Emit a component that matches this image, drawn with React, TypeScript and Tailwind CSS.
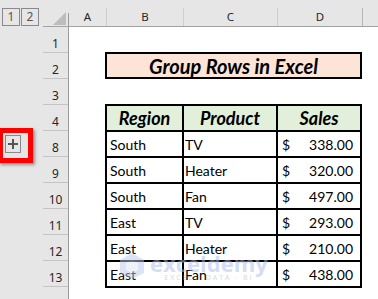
import React from "react";

const hdrFont = { fontFamily: '"Noto Sans", "DejaVu Sans", sans-serif' };
const cellFont = { fontFamily: 'Lato, "Noto Sans", sans-serif' };

const rows = ["1", "2", "3", "4", "8", "9", "10", "11", "12", "13"];

const data = [
  ["South", "TV", "338.00"],
  ["South", "Heater", "320.00"],
  ["South", "Fan", "497.00"],
  ["East", "TV", "293.00"],
  ["East", "Heater", "210.00"],
  ["East", "Fan", "438.00"],
];

export default function App() {
  return (
    <div className="relative w-[378px] h-[299px] overflow-hidden bg-white">
      {/* top band */}
      <div className="flex h-[27px] bg-[#e6e6e6]">
        <div className="w-[43px] flex pt-[8px] pl-[2px] gap-[1px]" style={hdrFont}>
          <div className="w-[18px] h-[18px] border border-[#8a8a8a] flex items-center justify-center text-[12px] leading-none text-[#555]">1</div>
          <div className="w-[18px] h-[18px] border border-[#8a8a8a] flex items-center justify-center text-[12px] leading-none text-[#555]">2</div>
        </div>
        <div className="flex-1 flex flex-col">
          <div className="h-[8px]" />
          <div className="flex flex-1 border-b border-[#a3a3a3] text-[11.5px] text-[#262626]" style={hdrFont}>
            <div className="relative w-[26px] flex flex-col">
              <div className="h-[5px]" />
              <div className="flex-1 border-r border-[#9c9c9c] relative">
                <svg className="absolute right-[2px] bottom-[1px]" width="13" height="13" viewBox="0 0 13 13">
                  <polygon points="13,0 13,13 0,13" fill="#bdbdbd" />
                </svg>
              </div>
            </div>
            <div className="w-[38px] border-r border-[#cfcfcf] flex items-center justify-center">A</div>
            <div className="w-[77px] border-r border-[#cfcfcf] flex items-center justify-center">B</div>
            <div className="w-[94px] border-r border-[#cfcfcf] flex items-center justify-center">C</div>
            <div className="w-[85px] border-r border-[#b5b5b5] flex items-center justify-center">D</div>
            <div className="flex-1" />
          </div>
        </div>
      </div>

      {/* body */}
      <div className="flex h-[272px]">
        {/* outline gutter */}
        <div className="w-[43px] bg-[#e6e6e6] flex flex-col">
          <div className="h-[104px]" />
          <div className="h-[26px] pt-[4px] pl-[5px]">
            <div className="w-[16px] h-[18px] border border-[#8a8a8a] flex items-center justify-center">
              <svg width="10" height="10" viewBox="0 0 10 10">
                <rect x="4" y="0" width="2" height="10" fill="#555" />
                <rect x="0" y="4" width="10" height="2" fill="#555" />
              </svg>
            </div>
          </div>
        </div>
        {/* row headers */}
        <div className="w-[26px] bg-[#e6e6e6] border-r border-[#9c9c9c] flex flex-col text-[12px] text-[#262626]" style={hdrFont}>
          {rows.map((r) => (
            <div key={r} className="h-[26px] border-b border-[#c4c4c4] flex items-end justify-center pb-[2px] leading-none">
              {r}
            </div>
          ))}
        </div>
        {/* cells */}
        <div className="flex-1 flex flex-col" style={cellFont}>
          <div className="h-[25px]" />
          <div className="ml-[36px] w-[257px] h-[27px] border-2 border-black bg-[#fce4d6] flex items-center justify-center text-[20px] font-bold italic text-black leading-none">
            Group Rows in Excel
          </div>
          <div className="h-[25px]" />
          <div className="ml-[36px] w-[257px] grid grid-cols-[75px_92px_82px] auto-rows-[24px] gap-[2px] p-[2px] bg-black text-[14px] text-black">
            <div className="bg-[#e2efda] flex items-center justify-center font-bold italic text-[18px] leading-none">Region</div>
            <div className="bg-[#e2efda] flex items-center justify-center font-bold italic text-[18px] leading-none">Product</div>
            <div className="bg-[#e2efda] flex items-center justify-center font-bold italic text-[18px] leading-none">Sales</div>
            {data.map((d, i) => (
              <React.Fragment key={i}>
                <div className="bg-white flex items-center pl-[3px]">{d[0]}</div>
                <div className="bg-white flex items-center pl-[1px]">{d[1]}</div>
                <div className="bg-white flex items-center justify-between pl-[4px] pr-[7px]">
                  <span>$</span>
                  <span>{d[2]}</span>
                </div>
              </React.Fragment>
            ))}
          </div>
        </div>
      </div>

      {/* watermark */}
      <div className="absolute left-[118px] top-[252px] flex items-start gap-[4px] opacity-50 pointer-events-none">
        <svg width="28" height="28" viewBox="0 0 28 28">
          <polygon points="14,1 26,8 26,21 14,27 2,21 2,8" fill="#b9c8ec" />
          <polygon points="14,8 20,11 20,18 14,21 8,18 8,11" fill="#dfe6f7" />
        </svg>
        <div className="flex flex-col items-center">
          <span className="text-[22px] font-bold leading-[22px] text-[#aabdea]" style={{ fontFamily: '"Open Sans", sans-serif' }}>exceldemy</span>
          <span className="text-[7px] tracking-[2px] leading-[8px] text-[#a9b0c4]" style={{ fontFamily: '"Open Sans", sans-serif' }}>EXCEL · DATA · BI</span>
        </div>
      </div>

      {/* red annotation box */}
      <div className="absolute left-[-2px] top-[128px] w-[35px] h-[35px] border-[5px] border-[#ff0000] shadow-[2px_2px_3px_rgba(0,0,0,0.35)]" />
    </div>
  );
}
